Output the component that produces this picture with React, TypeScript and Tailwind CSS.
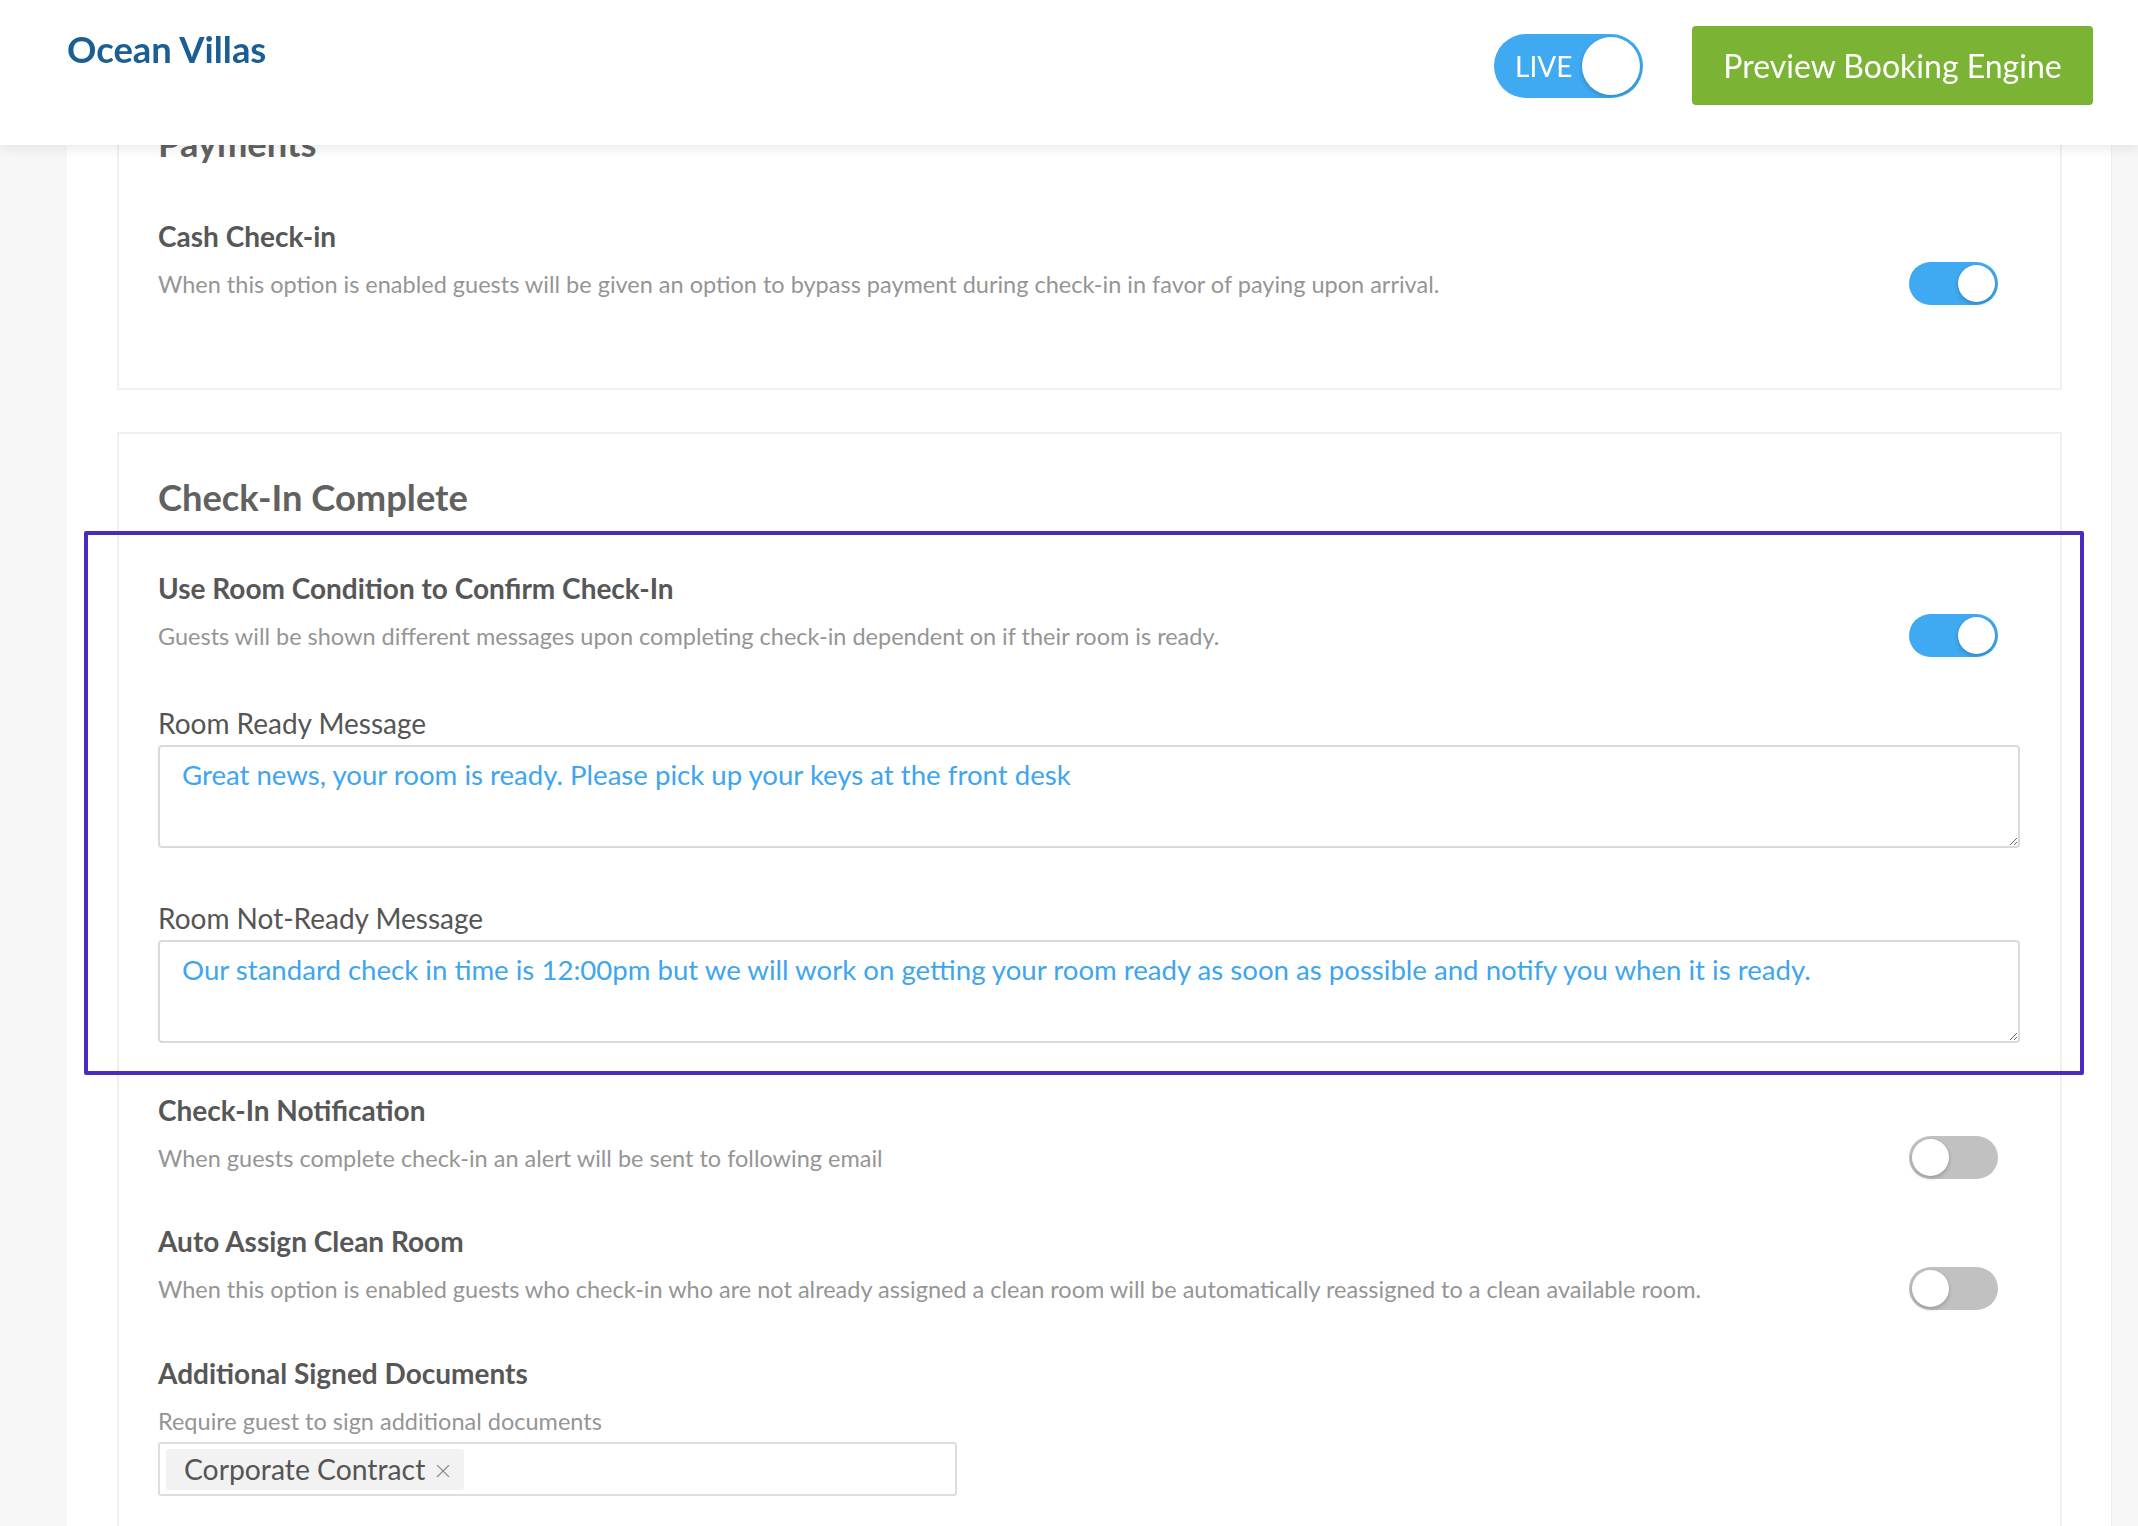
import React from 'react';

const Toggle = ({ on }: { on: boolean }) => (
  <div
    className={`flex h-[43px] w-[89px] shrink-0 items-center rounded-full px-[3px] ${
      on ? 'justify-end bg-[#3fa9f1]' : 'justify-start bg-[#c1c1c1]'
    }`}
  >
    <div className="h-[37px] w-[37px] rounded-full bg-white shadow-[0_2px_4px_rgba(0,0,0,0.22)]" />
  </div>
);

interface SettingProps {
  title: string;
  desc: string;
  on: boolean;
  className?: string;
}

const Setting = ({ title, desc, on, className = '' }: SettingProps) => (
  <div className={className}>
    <h4 className="text-[28px] font-bold leading-[34px] text-[#575757]">{title}</h4>
    <div className="mt-[9px] flex items-center justify-between">
      <p className="text-[23.5px] leading-[30px] text-[#959595]">{desc}</p>
      <div className="mr-[22px]">
        <Toggle on={on} />
      </div>
    </div>
  </div>
);

const MessageField = ({ label, value, className = '' }: { label: string; value: string; className?: string }) => (
  <div className={className}>
    <label className="block text-[28px] leading-[34px] text-[#555555]">{label}</label>
    <textarea
      readOnly
      defaultValue={value}
      className="mt-[5px] block h-[103px] w-full resize-y rounded-[4px] border-2 border-[#dadada] px-[22px] pt-[10px] text-[27.6px] leading-[36px] text-[#3ea5ef] outline-none"
    />
  </div>
);

export default function App() {
  return (
    <div className="relative h-[1526px] overflow-hidden bg-[#f8f7f8] font-['Lato','Noto_Sans',sans-serif]">
      {/* top bar */}
      <header className="fixed inset-x-0 top-0 z-10 flex h-[145px] bg-white pl-[67px] pr-[45px] shadow-[0_3px_12px_rgba(0,0,0,0.09)]">
        <h1 className="mt-[27px] text-[36.4px] font-bold leading-[44px] text-[#1b5e94]">Ocean Villas</h1>
        <div className="ml-auto flex h-[131px] items-center">
          <div className="flex h-[64px] w-[149px] items-center justify-between rounded-full bg-[#3fa9f1] pl-[21px] pr-[3px]">
            <span className="text-[28px] leading-none text-white">LIVE</span>
            <div className="h-[58px] w-[58px] rounded-full bg-white shadow-[0_2px_4px_rgba(0,0,0,0.2)]" />
          </div>
          <button className="ml-[49px] flex h-[79px] w-[401px] items-center justify-center rounded-[4px] bg-[#7bb334] text-[32px] text-white">
            Preview Booking Engine
          </button>
        </div>
      </header>

      <main className="ml-[67px] mr-[26px] min-h-full border-r border-[#efeeef] bg-white pl-[50px] pr-[49px] pt-[75px]">
        {/* Payments */}
        <section className="border-2 border-[#f0f0f0] pb-[83px] pl-[39px] pr-[40px] pt-[44px]">
          <h3 className="text-[36.3px] font-bold leading-[44px] text-[#616161]">Payments</h3>
          <Setting
            className="mt-[54px]"
            title="Cash Check-in"
            desc="When this option is enabled guests will be given an option to bypass payment during check-in in favor of paying upon arrival."
            on
          />
        </section>

        {/* Check-In Complete */}
        <section className="mt-[42px] border-2 border-[#f0f0f0] pb-[60px] pl-[39px] pr-[40px] pt-[41px]">
          <h3 className="text-[36.3px] font-bold leading-[44px] text-[#616161]">Check-In Complete</h3>

          <div className="relative mt-[52px]">
            <Setting
              title="Use Room Condition to Confirm Check-In"
              desc="Guests will be shown different messages upon completing check-in dependent on if their room is ready."
              on
            />
            <MessageField
              className="mt-[49px]"
              label="Room Ready Message"
              value="Great news, your room is ready. Please pick up your keys at the front desk"
            />
            <MessageField
              className="mt-[53px]"
              label="Room Not-Ready Message"
              value="Our standard check in time is 12:00pm but we will work on getting your room ready as soon as possible and notify you when it is ready."
            />
            {/* highlight frame */}
            <div className="pointer-events-none absolute -bottom-[32px] -left-[74px] -right-[64px] -top-[40px] rounded-[2px] border-4 border-[#4b2bbd]" />
          </div>

          <Setting
            className="mt-[50px]"
            title="Check-In Notification"
            desc="When guests complete check-in an alert will be sent to following email"
            on={false}
          />
          <Setting
            className="mt-[45px]"
            title="Auto Assign Clean Room"
            desc="When this option is enabled guests who check-in who are not already assigned a clean room will be automatically reassigned to a clean available room."
            on={false}
          />

          <div className="mt-[46px]">
            <h4 className="text-[28px] font-bold leading-[34px] text-[#575757]">Additional Signed Documents</h4>
            <p className="mt-[16px] text-[23.5px] leading-[30px] text-[#959595]">Require guest to sign additional documents</p>
            <div className="mt-[6px] flex h-[54px] w-[799px] items-center rounded-[3px] border-2 border-[#dddddd] px-[6px]">
              <span className="flex h-[41px] items-center gap-[9px] rounded-[3px] bg-[#f2f2f2] pl-[18px] pr-[12px] text-[28.3px] text-[#555555]">
                Corporate Contract
                <span className="text-[30px] font-light leading-none text-[#8a8a8a]">×</span>
              </span>
            </div>
          </div>
        </section>
      </main>
    </div>
  );
}
